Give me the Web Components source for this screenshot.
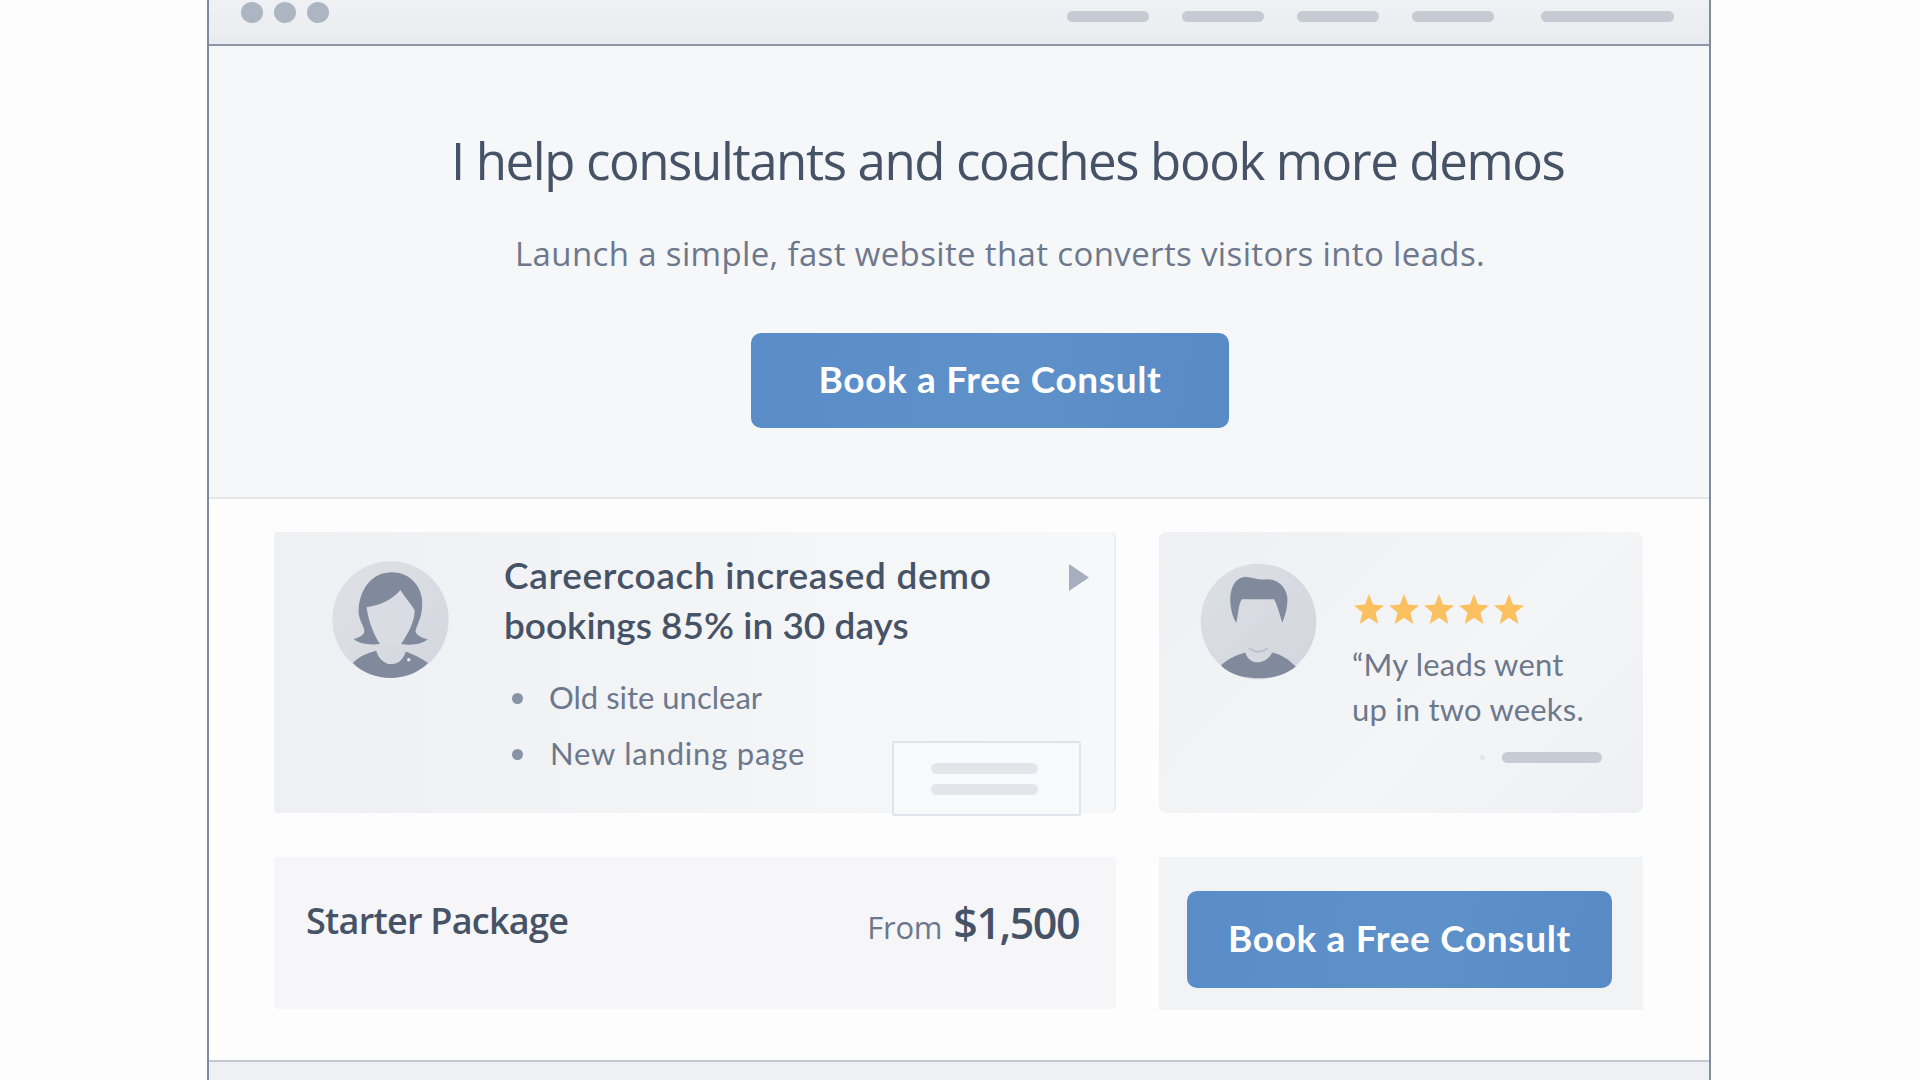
<!doctype html>
<html lang="en">
<head>
<meta charset="utf-8">
<title>Book a Free Consult</title>
<style>
  html, body { margin: 0; height: 1080px; overflow: hidden; background: #fdfdfd; }
  body { font-family: "Lato", "Liberation Sans", sans-serif; }
</style>
</head>
<body>
<app-window>
  <window-bar slot="bar"></window-bar>
  <hero-section>
    <span slot="title">I help consultants and coaches book more demos</span>
    <span slot="sub">Launch a simple, fast website that converts visitors into leads.</span>
    <cta-button slot="cta" style="--w:478px;--h:95px">Book a Free Consult</cta-button>
  </hero-section>
  <content-grid>
    <case-card>
      <person-avatar slot="avatar" kind="woman"></person-avatar>
      <span slot="title"><span style="letter-spacing:.65px">Careercoach increased demo</span><br>bookings 85% in 30 days</span>
      <li-item slot="items">Old site unclear</li-item>
      <li-item slot="items" style="--nudge:1px;--ls:.8px">New landing page</li-item>
    </case-card>
    <quote-card>
      <person-avatar slot="avatar" kind="man"></person-avatar>
      <span slot="quote">“My leads went<br>up in two weeks.</span>
    </quote-card>
    <price-card>
      <span slot="name">Starter Package</span>
      <span slot="from">From</span>
      <span slot="price">$1,500</span>
    </price-card>
    <cta-card>
      <cta-button style="--w:425px;--h:97px">Book a Free Consult</cta-button>
    </cta-card>
  </content-grid>
</app-window>

<script>
  function def(name, css, html, setup) {
    customElements.define(name, class extends HTMLElement {
      constructor() {
        super();
        this.attachShadow({ mode: 'open' }).innerHTML = '<style>' + css + '</style>' + html;
      }
      connectedCallback() { if (setup) setup(this); }
    });
  }

  def('app-window', `
    :host { display: flex; flex-direction: column; box-sizing: border-box; width: 1504px; height: 1080px;
            margin-left: 207px; border-left: 2px solid #7f8a9b; border-right: 2px solid #7f8a9b; }
    .foot { flex: 1; background: #eef0f3; border-top: 2px solid #c3c9d3; }
  `, `<slot name="bar"></slot><slot></slot><div class="foot"></div>`);

  def('window-bar', `
    :host { display: flex; box-sizing: border-box; height: 46px; padding: 2px 35px 0 32px;
            background: linear-gradient(#f0f1f4, #e9ebef); border-bottom: 2px solid #8d97a8; }
    .dots { display: flex; gap: 11px; }
    i { display: block; width: 22px; height: 21px; border-radius: 50%; background: #adb5c3; }
    nav { display: flex; gap: 32.5px; margin-left: auto; padding-top: 9px; }
    b { display: block; height: 11px; border-radius: 6px; background: #c5cad3; width: 82.5px; }
    b:last-child { width: 133px; margin-left: 14.5px; }
  `, `<div class="dots"><i></i><i></i><i></i></div><nav><b></b><b></b><b></b><b></b><b></b></nav>`);

  def('hero-section', `
    :host { display: flex; flex-direction: column; align-items: flex-start; box-sizing: border-box; height: 453px;
            background: #f6f7f9; border-bottom: 2px solid #e3e6eb; font-family: "Open Sans", sans-serif; }
    .t { font-size: 51px; letter-spacing: -1.4px; line-height: 60px; color: #465266; margin: 84px 0 0 242px; white-space: nowrap; }
    .s { font-size: 33px; letter-spacing: .36px; line-height: 40px; color: #6d788c; margin: 44px 0 0 306px; white-space: nowrap; }
    .c { margin: 59px 0 0 542px; }
  `, `<div class="t"><slot name="title"></slot></div><div class="s"><slot name="sub"></slot></div><div class="c"><slot name="cta"></slot></div>`);

  def('cta-button', `
    :host { display: flex; align-items: center; justify-content: center; box-sizing: border-box;
            width: var(--w); height: var(--h); border-radius: 10px; color: #fff; padding-bottom: 5px;
            background: linear-gradient(100deg, #5a8dc8, #5e90c9 55%, #588bc6);
            font: 700 37px "Lato", sans-serif; letter-spacing: .65px; }
  `, `<slot></slot>`);

  def('content-grid', `
    :host { display: grid; grid-template-columns: 842px 484px; grid-template-rows: 281px 152px;
            gap: 44px 43px; padding: 33px 0 0 65px; flex: none; height: 561px; box-sizing: border-box; background: #fdfdfd; }
  `, `<slot></slot>`);

  def('person-avatar', `
    :host { display: block; flex: none; width: 117px; height: 117px; }
    svg { display: block; width: 100%; height: 100%; }
  `, `<svg></svg>`, (el) => {
    const svg = el.shadowRoot.querySelector('svg');
    if (el.getAttribute('kind') === 'woman') {
      svg.setAttribute('viewBox', '215 123 350 352');
      svg.innerHTML = `
        <defs><linearGradient id="g" x1="0" y1="0" x2="1" y2="1"><stop offset="0" stop-color="#dfe1e6"/><stop offset="1" stop-color="#d3d6dd"/></linearGradient></defs>
        <circle cx="390" cy="299" r="175" fill="url(#g)"/>
        <path fill="#818a9d" d="M395 157C335 157 298 205 294 270C292 305 318 325 310 340C303 350 290 355 279 358C300 376 340 376 362 372L420 372C445 378 485 376 502 358C485 355 470 348 465 335C475 300 487 290 485 240C480 190 440 157 395 157Z"/>
        <path fill="#d9dce2" d="M318 262C360 255 395 240 420 210C435 235 455 255 463 272C462 310 440 345 420 376L360 376C340 345 325 310 318 262Z"/>
        <path fill="#818a9d" d="M277 430C295 410 320 400 347 393C355 420 375 435 395 433C415 433 430 415 436 395C460 405 485 415 503 430C470 462 430 475 390 475C350 475 305 460 277 430Z"/>
        <circle cx="445" cy="420" r="5" fill="#e8eaee"/>`;
    } else {
      svg.setAttribute('viewBox', '150 130 348 342');
      svg.innerHTML = `
        <defs><linearGradient id="g" x1="0" y1="0" x2="1" y2="1"><stop offset="0" stop-color="#dcdfe4"/><stop offset="1" stop-color="#d2d5dc"/></linearGradient></defs>
        <circle cx="324" cy="301" r="172" fill="url(#g)"/>
        <path fill="#818a9d" d="M240 235C240 200 255 170 285 168C310 170 325 180 350 175C385 175 410 205 410 235C410 265 402 285 395 305C388 285 380 250 370 235L275 235C265 245 265 275 258 305C248 290 240 265 240 235Z"/>
        <path fill="none" stroke="#bcc1cb" stroke-width="6" d="M295 380Q325 402 352 380"/>
        <path fill="#818a9d" d="M212 432C235 410 260 400 285 393C295 432 345 432 365 393C395 400 415 415 435 435C405 460 365 470 325 470C285 470 240 460 212 432Z"/>`;
    }
  });

  def('case-card', `
    :host { display: flex; position: relative; box-sizing: border-box; height: 281px; padding: 18px 0 0 58px;
            background: linear-gradient(90deg, #eef0f3, #f7f8f9); border-radius: 4px 6px 6px 4px;
            border-right: 2px solid #e9ecf1; }
    .av { margin-top: 11px; }
    .main { margin-left: 55px; flex: 1; }
    .head { display: flex; justify-content: space-between; }
    .t { font: 600 37px/50px "Lato", sans-serif; color: #465266; white-space: nowrap; }
    svg { flex: none; width: 20px; height: 27px; margin: 14px 25px 0 0; }
    .list { margin-top: 19px; }
    .mini { position: absolute; right: 33px; bottom: -3px; width: 189px; height: 75px; box-sizing: border-box;
            border: 2px solid #dfe3ea; border-radius: 3px; background: #f8f9fa;
            display: flex; flex-direction: column; gap: 10px; align-items: center; padding: 20px 4px 0 0; }
    .mini i { display: block; width: 107px; height: 11px; border-radius: 6px; background: #e3e5ea; }
  `, `<div class="av"><slot name="avatar"></slot></div>
      <div class="main">
        <div class="head"><div class="t"><slot name="title"></slot></div>
          <svg viewBox="0 0 20 27"><path fill="#a7afbf" d="M0 0L20 13.5L0 27Z"/></svg></div>
        <div class="list"><slot name="items"></slot></div>
      </div>
      <div class="mini"><i></i><i></i></div>`);

  def('li-item', `
    :host { display: flex; align-items: center; font: 400 31px/56px "Lato", sans-serif; color: #6d788c; white-space: nowrap; letter-spacing: var(--ls, 0); }
    i { display: block; flex: none; width: 11px; height: 11px; border-radius: 50%; background: #8793a6; margin: 3px 0 0 8px; }
    span { margin-left: calc(26px + var(--nudge, 0px)); }
  `, `<i></i><span><slot></slot></span>`);

  def('quote-card', `
    :host { display: flex; box-sizing: border-box; height: 281px; padding: 31px 41px 0 41px;
            background: linear-gradient(135deg, #eff0f3, #f4f5f7 60%, #eff0f3); border-radius: 8px; }
    .main { margin-left: 37px; padding-top: 31px; flex: 1; }
    .stars { display: flex; gap: 5px; }
    .stars svg { display: block; width: 30px; height: 30px; }
    .q { margin: 18px 0 0 -2px; font: 400 31px/45px "Lato", sans-serif; letter-spacing: .2px; color: #6d788c; white-space: nowrap; }
    .bar { display: flex; align-items: center; justify-content: flex-end; margin-top: 20px; }
    .bar u { display: block; width: 5px; height: 5px; border-radius: 50%; background: #e4e6ea; margin-right: 17px; }
    .bar i { display: block; width: 100px; height: 11px; border-radius: 6px; background: #c6cbd4; }
  `, `<slot name="avatar"></slot>
      <div class="main">
        <div class="stars">${'<svg viewBox="0 0 30 30"><path fill="#fbc05f" d="M15 0L19 10.6L30 11.4L21.5 18.6L24.3 30L15 23.7L5.7 30L8.5 18.6L0 11.4L11 10.6Z"/></svg>'.repeat(5)}</div>
        <div class="q"><slot name="quote"></slot></div>
        <div class="bar"><u></u><i></i></div>
      </div>`);

  def('price-card', `
    :host { display: flex; justify-content: space-between; align-items: flex-start; box-sizing: border-box;
            height: 152px; padding: 0 37px 0 32px; background: #f6f6f8; border-radius: 3px;
            font-family: "Open Sans", sans-serif; }
    .n { margin-top: 44px; font-size: 36px; letter-spacing: -.75px; font-weight: 600; line-height: 40px; color: #465266; white-space: nowrap; }
    .p { margin-top: 41px; display: flex; align-items: baseline; gap: 11px; line-height: 50px; white-space: nowrap; }
    .f { font-size: 31px; letter-spacing: -.2px; color: #6d788c; }
    .v { font-size: 43px; letter-spacing: -1.5px; font-weight: 600; color: #465266; }
  `, `<div class="n"><slot name="name"></slot></div>
      <div class="p"><span class="f"><slot name="from"></slot></span><span class="v"><slot name="price"></slot></span></div>`);

  def('cta-card', `
    :host { display: block; box-sizing: border-box; height: 153px; padding: 34px 0 0 28px; background: #f2f3f5; }
  `, `<slot></slot>`);
</script>
</body>
</html>
